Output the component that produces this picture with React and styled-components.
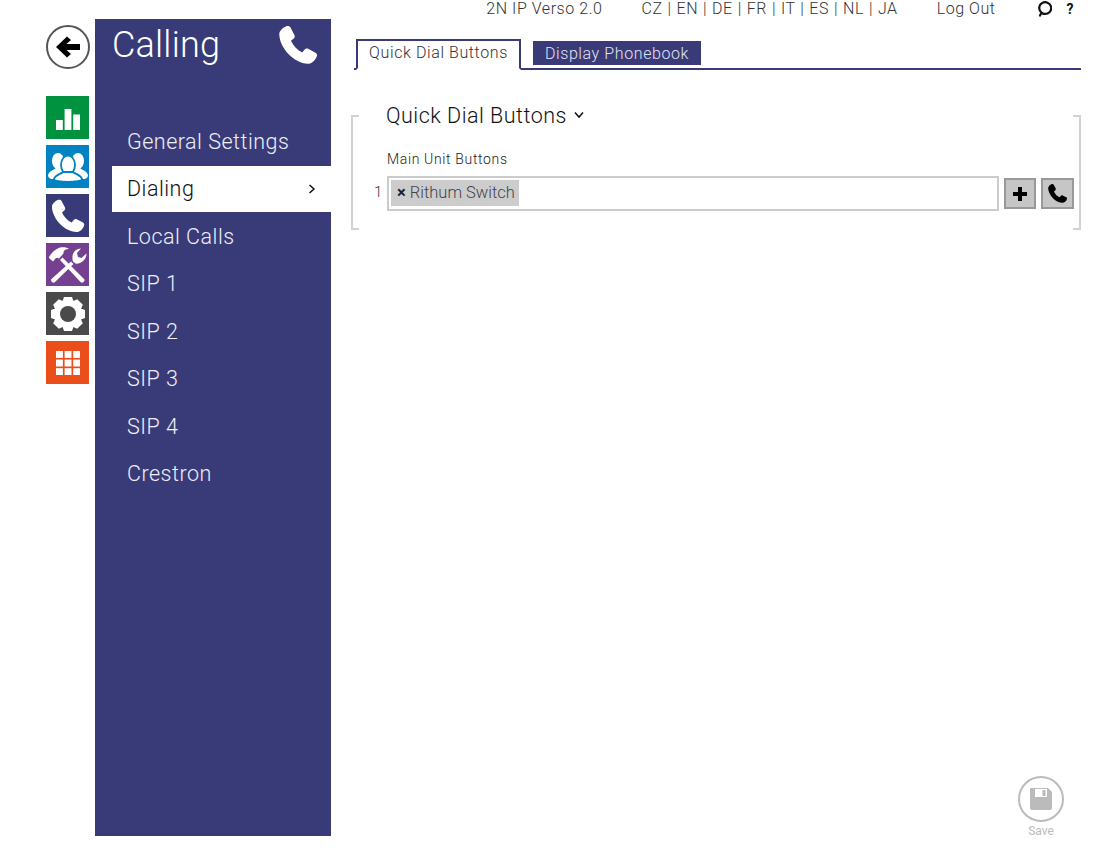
import * as React from 'react'
import styled, { createGlobalStyle } from 'styled-components'

const navy = '#393b78'

const GlobalStyle = createGlobalStyle`
  html, body {
    margin: 0;
    padding: 0;
    background: #fff;
    font-family: Roboto, "Liberation Sans", sans-serif;
    font-weight: 300;
    color: #222;
  }
`

const Page = styled.div`
  width: 1119px;
  height: 848px;
  display: grid;
  grid-template-columns: 46px 43px 6px 236px 23px 727px 38px;
  grid-template-rows: 19px 817px 12px;
  overflow: hidden;
`
const TopBar = styled.header`
  grid-column: 1 / -1;
  display: flex;
  justify-content: flex-end;
  align-items: center;
  gap: 39px;
  padding: 0 45px 2px 0;
  font-size: 16px;
  letter-spacing: 0.55px;
  color: #333;
`
const Languages = styled.span`
  word-spacing: 0.5px;
`
const TopIcons = styled.div`
  display: flex;
  align-items: center;
  gap: 14px;
  margin-left: 3px;
  font-weight: 700;
  font-size: 14px;
  color: #111;
`
const Rail = styled.nav`
  grid-column: 2;
  grid-row: 2;
  display: flex;
  flex-direction: column;
  gap: 6px;
`
const BackButton = styled.div`
  width: 40px;
  height: 40px;
  margin: 6px 0 21px 0;
  border: 2px solid #555;
  border-radius: 50%;
  display: flex;
  align-items: center;
  justify-content: center;
`
const Tile = styled.div`
  width: 43px;
  height: 43px;
  background: ${p => p.$color};
  display: flex;
  align-items: center;
  justify-content: center;
`
const Sidebar = styled.aside`
  grid-column: 4;
  grid-row: 2;
  background: ${navy};
  display: flex;
  flex-direction: column;
`
const SideHead = styled.div`
  height: 96px;
  padding: 3px 12px 0 17px;
  display: flex;
  justify-content: space-between;
  align-items: flex-start;
`
const SideTitle = styled.h1`
  margin: 0;
  font-size: 36px;
  line-height: 46px;
  letter-spacing: 0.2px;
  font-weight: 300;
  color: #fff;
`
const SideIcon = styled.span`
  display: flex;
  margin-top: 2px;
`
const NavList = styled.div`
  margin: 0 0 0 17px;
  display: flex;
  flex-direction: column;
  gap: 1.5px;
`
const NavItem = styled.div`
  height: 46px;
  padding: 0 15px;
  display: flex;
  align-items: center;
  justify-content: space-between;
  font-size: 21.5px;
  letter-spacing: 0.5px;
  color: ${p => (p.$active ? '#111' : '#eeeef6')};
  background: ${p => (p.$active ? '#fff' : 'transparent')};
`
const Main = styled.main`
  grid-column: 6;
  grid-row: 2;
  display: flex;
  flex-direction: column;
  padding-top: 20px;
`
const TabStrip = styled.div`
  height: 29px;
  display: flex;
  align-items: flex-start;
  border-bottom: 2px solid ${navy};
  padding-left: 2px;
`
const ActiveTab = styled.div`
  width: 161px;
  height: 23px;
  padding-bottom: 4px;
  border: 2px solid ${navy};
  border-bottom: 2px solid #fff;
  display: flex;
  align-items: center;
  justify-content: center;
  font-size: 16px;
  letter-spacing: 0.6px;
  color: #333;
`
const Tab = styled.div`
  width: 168px;
  height: 24px;
  margin: 2px 0 0 12px;
  background: ${navy};
  color: #e2e2f0;
  display: flex;
  align-items: center;
  justify-content: center;
  font-size: 16px;
  letter-spacing: 0.6px;
`
const Bracket = styled.section`
  position: relative;
  margin: 45px 0 0 -3px;
  height: 115px;
  width: 726px;
  border-left: 2px solid #d2d2d2;
  border-right: 2px solid #d2d2d2;
  &::before, &::after {
    content: '';
    position: absolute;
    top: 0;
    left: 0;
    right: 0;
    height: 100%;
    background:
      linear-gradient(#d2d2d2, #d2d2d2) left top / 6px 2px no-repeat,
      linear-gradient(#d2d2d2, #d2d2d2) right top / 6px 2px no-repeat;
  }
  &::after {
    transform: scaleY(-1);
  }
`
const SectionHead = styled.h2`
  position: relative;
  z-index: 1;
  margin: 0 0 0 33px;
  transform: translateY(-14px);
  height: 28px;
  display: flex;
  align-items: center;
  gap: 8px;
  font-size: 21.5px;
  letter-spacing: 0.5px;
  font-weight: 300;
  color: #111;
`
const FieldLabel = styled.div`
  margin: 6px 0 0 34px;
  height: 20px;
  font-size: 14px;
  line-height: 20px;
  letter-spacing: 0.65px;
  color: #222;
  font-weight: 300;
`
const FieldRow = styled.div`
  position: relative;
  z-index: 1;
  margin: 7px 0 0 21px;
  display: flex;
  align-items: center;
`
const RowNumber = styled.span`
  width: 13px;
  padding-bottom: 3px;
  font-size: 15px;
  color: #333;
`
const TagInput = styled.div`
  box-sizing: border-box;
  width: 612px;
  height: 35px;
  border: 2px solid #ccc;
  padding: 2px;
  display: flex;
  align-items: flex-start;
`
const Tag = styled.div`
  width: 128px;
  height: 26px;
  background: #ccc;
  display: flex;
  align-items: center;
  gap: 4px;
  padding: 0 0 2px 6px;
  box-sizing: border-box;
  font-size: 16.5px;
  color: #444;
`
const TagClose = styled.b`
  font-weight: 700;
  color: #222;
`
const SquareButton = styled.div`
  box-sizing: border-box;
  width: ${p => p.$w}px;
  height: 31px;
  margin-left: 5px;
  background: #c6c6c6;
  border: 2px solid #999;
  display: flex;
  align-items: center;
  justify-content: center;
`
const SaveBlock = styled.div`
  margin: auto 17px -2px 0;
  align-self: flex-end;
  display: flex;
  flex-direction: column;
  align-items: center;
  gap: 2px;
  color: #bbb;
  font-size: 12px;
  font-weight: 400;
`
const SaveCircle = styled.div`
  box-sizing: border-box;
  width: 46px;
  height: 46px;
  border: 2px solid #bbb;
  border-radius: 50%;
  display: flex;
  align-items: center;
  justify-content: center;
`

const PHONE = 'M5.6 1.2 C6.5 .9 7.3 1.2 7.7 2 L10 6.4 C10.3 7.1 10.2 7.8 9.6 8.3 L8 9.6 C9.2 12.4 11.5 14.9 14.4 16.3 L15.8 14.6 C16.3 14 17.1 13.9 17.8 14.2 L22 16.4 C22.8 16.9 23.1 17.7 22.7 18.5 C21.8 20.8 20 22.6 17.6 22.7 C9.6 22.4 1.6 13.8 1.3 6 C1.3 4 3.2 2.2 5.6 1.2 Z'

function PhoneIcon({ size, color }) {
  return (
    <svg width={size} height={size} viewBox="0 0 24 24">
      <path d={PHONE} fill={color} />
    </svg>
  )
}

function BackArrow() {
  return (
    <svg width="26" height="24" viewBox="0 0 26 24">
      <path d="M1 12 L12 1.5 L16 5 L11.5 9 H25 V15 H11.5 L16 19 L12 22.5 Z" fill="#000" />
    </svg>
  )
}

function BarsIcon() {
  return (
    <svg width="24" height="24" viewBox="0 0 24 24" fill="#fff">
      <rect x="0" y="14" width="6.8" height="10" />
      <rect x="8.6" y="3" width="6.8" height="21" />
      <rect x="17.2" y="8.5" width="6.8" height="15.5" />
    </svg>
  )
}

function UsersIcon() {
  return (
    <svg width="40" height="30" viewBox="0 0 40 30" fill="#fff">
      <ellipse cx="10" cy="9" rx="6" ry="8" />
      <path d="M0 23 C1 19 6 18 8 16 H13 C15 18 19 20 20 24 L16 27 H3 C1 26 0 25 0 23 Z" />
      <ellipse cx="30" cy="9" rx="6" ry="8" />
      <path d="M40 23 C39 19 34 18 32 16 H27 C25 18 21 20 20 24 L24 27 H37 C39 26 40 25 40 23 Z" />
      <ellipse cx="20" cy="13" rx="7" ry="9.5" stroke="#0082c3" strokeWidth="1.8" />
      <path d="M6 27 C7 23 13 22 15 20 H25 C27 22 33 23 34 27 C34 29 27 30 20 30 C13 30 6 29 6 27 Z" stroke="#0082c3" strokeWidth="1.8" />
    </svg>
  )
}

function ToolsIcon() {
  return (
    <svg width="40" height="38" viewBox="0 0 40 38" fill="#fff">
      <path d="M12 14 L14.5 11.5 L36 33 C37 34 36.5 35 35.5 36 C34.5 37 33.5 37 32.5 36 Z" />
      <path d="M1 11 C3 8 7 3 12 1.5 C15 .8 19 1 21 3 C17 3 15 5 15.5 7.5 L11 12.5 C9 11 7.5 12 6 14.5 L5 15.5 L1 12 Z" />
      <path d="M23 15.5 L25.5 18 L7 36 C6 37 5 37 4 36 C3 35 2.5 34 3.5 33 Z" />
      <path d="M25 15.5 C23 9 26 3 33 2.5 L29 7 L30 11 L33.5 12 L38.5 7.5 C38.5 14 32 18.5 27.5 17.5 Z" />
    </svg>
  )
}

function GearIcon() {
  const teeth = [0, 45, 90, 135, 180, 225, 270, 315]
  return (
    <svg width="36" height="36" viewBox="0 0 36 36">
      <g fill="#fff">
        <circle cx="18" cy="18" r="13.5" />
        {teeth.map(a => (
          <path key={a} d="M14 1 H22 L24.5 8 H11.5 Z" transform={`rotate(${a} 18 18)`} />
        ))}
      </g>
      <circle cx="18" cy="18" r="8" fill="#4a4a4a" />
    </svg>
  )
}

function GridIcon() {
  const cells = [0, 1, 2, 3, 4, 5, 6, 7, 8]
  return (
    <svg width="24" height="24" viewBox="0 0 24 24" fill="#fff">
      {cells.map(i => (
        <rect key={i} x={(i % 3) * 8.6} y={Math.floor(i / 3) * 8.6} width="6.9" height="6.9" />
      ))}
    </svg>
  )
}

function Bubble() {
  return (
    <svg width="15" height="16" viewBox="0 0 15 16">
      <path d="M4.5 11.6 A6 5.8 0 1 1 7.5 12.8 C6.5 12.8 5.5 12.6 4.5 11.6 L3 14.5 Z" fill="none" stroke="#111" strokeWidth="2.2" strokeLinejoin="round" />
    </svg>
  )
}

function Chevron({ down }) {
  return (
    <svg width="8" height="10" viewBox="0 0 8 10" style={down ? { transform: 'rotate(90deg)' } : undefined}>
      <path d="M1.5 1 L6 5 L1.5 9" fill="none" stroke="#111" strokeWidth="1.5" />
    </svg>
  )
}

function PlusIcon() {
  return (
    <svg width="14" height="14" viewBox="0 0 14 14">
      <path d="M5 0 H9 V5 H14 V9 H9 V14 H5 V9 H0 V5 H5 Z" fill="#000" />
    </svg>
  )
}

function FloppyIcon() {
  return (
    <svg width="24" height="24" viewBox="0 0 24 24">
      <path fillRule="evenodd" d="M2 1 H19 L23 5 V21 C23 22.2 22.2 23 21 23 H3 C1.8 23 1 22.2 1 21 V2 C1 1.4 1.4 1 2 1 Z M6 2 V10 H18 V2 Z M13.5 3 H16.5 V9 H13.5 Z" fill="#bbb" />
    </svg>
  )
}

const tiles = [
  { color: '#00923f', icon: <BarsIcon /> },
  { color: '#0082c3', icon: <UsersIcon /> },
  { color: navy, icon: <PhoneIcon size={36} color="#fff" /> },
  { color: '#75408f', icon: <ToolsIcon /> },
  { color: '#4a4a4a', icon: <GearIcon /> },
  { color: '#e94e1b', icon: <GridIcon /> },
]

const navItems = ['General Settings', 'Dialing', 'Local Calls', 'SIP 1', 'SIP 2', 'SIP 3', 'SIP 4', 'Crestron']

export default function App() {
  return (
    <Page>
      <GlobalStyle />
      <TopBar>
        <span>2N IP Verso 2.0</span>
        <Languages>CZ | EN | DE | FR | IT | ES | NL | JA</Languages>
        <span>Log Out</span>
        <TopIcons>
          <Bubble />
          <span>?</span>
        </TopIcons>
      </TopBar>
      <Rail>
        <BackButton><BackArrow /></BackButton>
        {tiles.map(t => <Tile key={t.color} $color={t.color}>{t.icon}</Tile>)}
      </Rail>
      <Sidebar>
        <SideHead>
          <SideTitle>Calling</SideTitle>
          <SideIcon><PhoneIcon size={42} color="#fff" /></SideIcon>
        </SideHead>
        <NavList>
          {navItems.map(name => (
            <NavItem key={name} $active={name === 'Dialing'}>
              {name}
              {name === 'Dialing' && <Chevron />}
            </NavItem>
          ))}
        </NavList>
      </Sidebar>
      <Main>
        <TabStrip>
          <ActiveTab>Quick Dial Buttons</ActiveTab>
          <Tab>Display Phonebook</Tab>
        </TabStrip>
        <Bracket>
          <SectionHead>Quick Dial Buttons <Chevron down /></SectionHead>
          <FieldLabel>Main Unit Buttons</FieldLabel>
          <FieldRow>
            <RowNumber>1</RowNumber>
            <TagInput>
              <Tag><TagClose>×</TagClose>Rithum Switch</Tag>
            </TagInput>
            <SquareButton $w={32}><PlusIcon /></SquareButton>
            <SquareButton $w={33}><PhoneIcon size={21} color="#000" /></SquareButton>
          </FieldRow>
        </Bracket>
        <SaveBlock>
          <SaveCircle><FloppyIcon /></SaveCircle>
          <span>Save</span>
        </SaveBlock>
      </Main>
    </Page>
  )
}
